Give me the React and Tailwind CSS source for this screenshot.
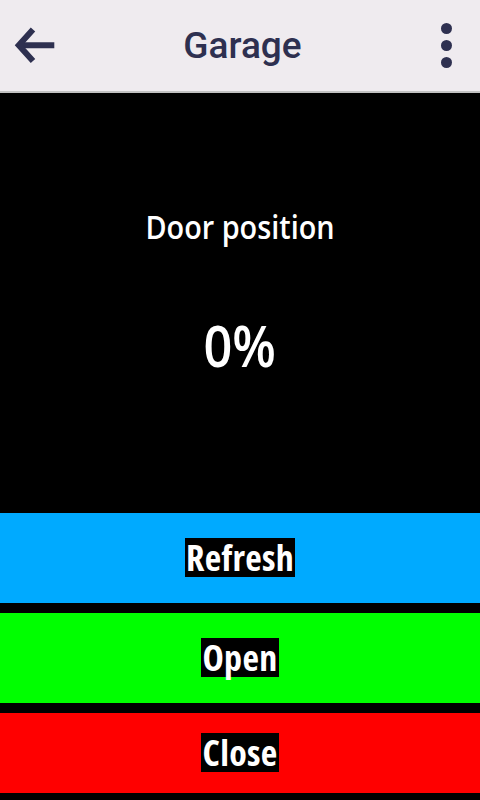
import React from 'react'

function BackArrow() {
  return (
    <svg width="48" height="44" viewBox="0 0 48 44" className="ml-[9px]">
      <path d="M9 21.2 H45.3" stroke="#2e3050" strokeWidth="6" fill="none" />
      <path d="M24 5.5 L9.8 21.2 L24 37" stroke="#2e3050" strokeWidth="6" fill="none" strokeLinejoin="miter" />
    </svg>
  )
}

function MoreDots() {
  return (
    <div className="flex flex-col items-center gap-[6px] mr-[28px]">
      <span className="block w-[11px] h-[11px] rounded-full bg-[#2e3050]" />
      <span className="block w-[11px] h-[11px] rounded-full bg-[#2e3050]" />
      <span className="block w-[11px] h-[11px] rounded-full bg-[#2e3050]" />
    </div>
  )
}

function ActionButton({ label, color, height }) {
  return (
    <button className={`w-full flex items-center justify-center ${color} ${height}`}>
      <span className="inline-block bg-black text-white font-bold text-[36px] leading-[39px] px-[1px] mb-[2px] tracking-[0.3px] font-stretch-condensed">
        {label}
      </span>
    </button>
  )
}

export default function App() {
  return (
    <div className="w-[480px] h-[800px] bg-black overflow-hidden" style={{ fontFamily: '"Open Sans", "Noto Sans", sans-serif' }}>
      {/* Top bar */}
      <div className="h-[93px] bg-[#efebef] border-b-2 border-[#c2c2c2] grid grid-cols-[1fr_auto_1fr] items-center">
        <div className="flex items-center">
          <BackArrow />
        </div>
        <h1 className="text-[37px] font-medium text-[#2e3050] leading-none ml-[5px]" style={{ fontFamily: 'Roboto, sans-serif' }}>
          Garage
        </h1>
        <div className="flex justify-end">
          <MoreDots />
        </div>
      </div>

      {/* Status */}
      <div className="h-[420px] flex flex-col items-center text-white">
        <div className="mt-[118px] text-[32px] leading-none font-semibold scale-x-90">Door position</div>
        <div className="mt-[73px] text-[58px] leading-none font-semibold scale-x-[0.87]">0%</div>
      </div>

      {/* Actions */}
      <div className="flex flex-col gap-[10px]">
        <ActionButton label="Refresh" color="bg-[#00aaff]" height="h-[90px]" />
        <ActionButton label="Open" color="bg-[#00ff00]" height="h-[90px]" />
        <ActionButton label="Close" color="bg-[#ff0000]" height="h-[80px]" />
      </div>
    </div>
  )
}
